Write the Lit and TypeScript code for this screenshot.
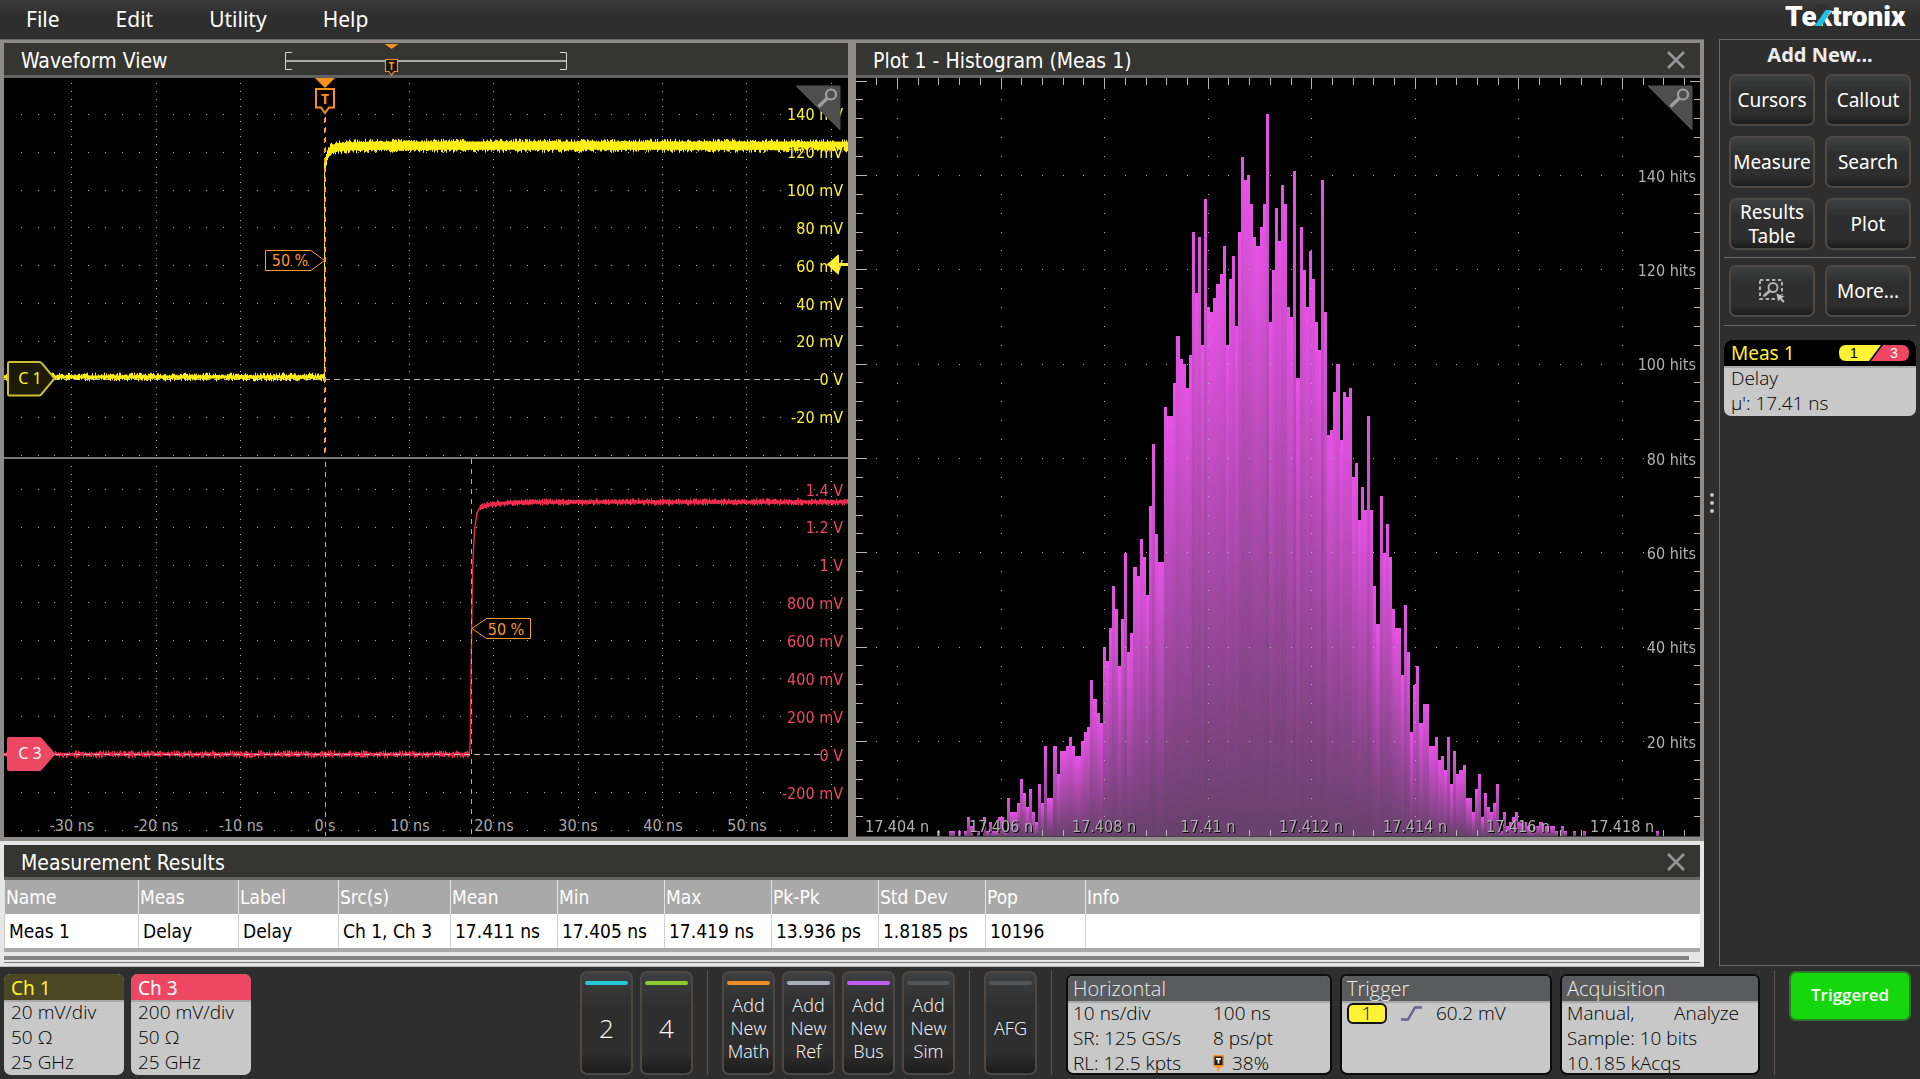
import { LitElement, html, css, svg } from "lit";
import { customElement, property } from "lit/decorators.js";

/* ---------- trace and grid data ---------- */

const DIV_X = 84.4;
const DIV_Y = 37.9;
const TRIGGER_X = 325;

function random(seed: number): () => number {
  let s = seed;
  return () => {
    s = (s * 1664525 + 1013904223) % 4294967296;
    return s / 4294967296;
  };
}

/** Vertical one-pixel strokes around a centre line, with noise on both ends. */
function noisyBand(
  from: number,
  to: number,
  centre: (x: number) => number,
  half: number,
  jitter: number,
  seed: number,
): string {
  const rnd = random(seed);
  let d = "";
  for (let x = from; x < to; x++) {
    const c = centre(x);
    const up = half + Math.pow(rnd(), 2) * jitter;
    const down = half + Math.pow(rnd(), 2) * jitter;
    d += `M${x}.5 ${(c - up).toFixed(1)}V${(c + down).toFixed(1)}`;
  }
  return d;
}

/** Dotted graticule: five dots per division along every grid line. */
function graticule(
  x0: number, x1: number, dx: number, ox: number,
  y0: number, y1: number, dy: number, oy: number,
  skipAxes = false,
): string {
  let d = "";
  const dot = (x: number, y: number) => {
    if (skipAxes && (Math.abs(x - ox) < 1 || Math.abs(y - oy) < 1)) return;
    d += `M${Math.floor(x)} ${Math.floor(y)}.5h1`;
  };
  const first = (o: number, step: number, low: number) => o - Math.floor((o - low) / step) * step;
  for (let x = first(ox, dx, x0); x < x1; x += dx) {
    for (let y = first(oy, dy / 5, y0); y < y1; y += dy / 5) dot(x, y);
  }
  for (let y = first(oy, dy, y0); y < y1; y += dy) {
    for (let x = first(ox, dx / 5, x0); x < x1; x += dx / 5) dot(x, y);
  }
  return d;
}

const CH1_LOW = noisyBand(4, 325, () => 377, 1.5, 3, 11);
const CH1_HIGH = noisyBand(325, 848, (x) => 145.7 + 15 * Math.exp(-(x - 325) / 2.5) + 4 * Math.exp(-(x - 325) / 14), 4, 3.2, 29);
const CH3_LOW = noisyBand(4, 470, () => 754.3, 1.3, 2.8, 47);
const CH3_HIGH = noisyBand(480, 848, (x) => 502 + 5 * Math.exp(-(x - 480) / 16), 1.6, 2.2, 83);

const CH1_SCALE = ["140 mV", "120 mV", "100 mV", "80 mV", "60 mV", "40 mV", "20 mV", "0 V", "-20 mV"];
const CH3_SCALE = ["1.4 V", "1.2 V", "1 V", "800 mV", "600 mV", "400 mV", "200 mV", "0 V", "-200 mV"];
const TIME_SCALE = ["-30 ns", "-20 ns", "-10 ns", "0 s", "10 ns", "20 ns", "30 ns", "40 ns", "50 ns"];

/* Hits per bin, from the first populated bin on. */
const HITS = [
  1, 0, 0, 0, 1, 1, 0, 1, 0, 1, 4, 2, 0, 1, 0, 4, 1, 3, 1, 1, 4, 4, 1, 8, 5, 5, 7, 12, 9, 6, 10, 5, 3, 11, 7, 19, 8, 8,
  19, 13, 18, 18, 19, 21, 19, 17, 17, 20, 22, 23, 33, 29, 26, 24, 40, 37, 44, 53, 48, 36, 46, 60, 39, 43, 57, 55, 63,
  59, 51, 70, 83, 64, 58, 58, 91, 89, 89, 96, 106, 101, 100, 95, 102, 128, 115, 127, 104, 135, 112, 111, 114, 117,
  119, 125, 104, 118, 123, 108, 128, 144, 139, 140, 134, 127, 125, 129, 134, 153, 109, 120, 133, 126, 138, 134, 112,
  110, 141, 97, 129, 120, 112, 124, 118, 109, 103, 139, 111, 85, 86, 94, 100, 84, 94, 93, 95, 76, 79, 67, 74, 69, 89,
  69, 53, 45, 72, 60, 66, 59, 48, 44, 44, 34, 49, 39, 22, 32, 36, 24, 28, 28, 19, 19, 21, 16, 17, 14, 21, 11, 18, 13,
  14, 15, 8, 8, 5, 10, 13, 4, 9, 6, 5, 7, 11, 1, 5, 2, 3, 4, 5, 3, 3, 3, 2, 1, 2, 2, 3, 2, 2, 2, 2, 1, 0, 2, 1, 0, 0,
  1, 0, 0, 1, 0, 0, 0, 0, 0, 0, 0, 0, 0, 0, 0, 0, 0, 0, 0, 0, 0, 0, 0, 0, 0, 0, 0, 1,
];
const BIN = 3.0759;
const HIT = 4.717;
const HIST_BASE = 836;
const binX = (i: number) => Math.floor(1053.958 + BIN * (i - 38));

const DELAY_SCALE = ["17.404 n", "17.406 n", "17.408 n", "17.41 n", "17.412 n", "17.414 n", "17.416 n", "17.418 n"];
const DELAY_X = 897.5;
const DELAY_STEP = 103.57;

function histogramTicks(): string {
  let d = "";
  for (let k = -2; k <= 38; k++) {
    const x = Math.floor(DELAY_X + (k * DELAY_STEP) / 5) + 0.5;
    if (x < 858 || x > 1698) continue;
    const major = ((k % 5) + 5) % 5 === 0;
    d += `M${x} 78V${major ? 89 : 85}`;
    const near = Math.min(...DELAY_SCALE.map((_, i) => Math.abs(DELAY_X + i * DELAY_STEP - x)));
    if (near > 32) d += `M${x} 830V836`;
  }
  for (let k = 1; k <= 40; k++) {
    const y = Math.floor(835.8 - k * 4 * HIT) + 0.5;
    const major = k % 5 === 0;
    d += `M856 ${y}h${major ? 11 : 7}`;
    if (!major) d += `M1694 ${y}h6`;
    if (k === 40) d += `M1690 ${y}h10`;
  }
  return d;
}

const zoomCorner = (x: number) => svg`
  <g class="corner">
    <path d="M${x + 1} 86h43q1 0 1 1v43z" fill="#4e4e4e" stroke="#4e4e4e" stroke-linejoin="round"/>
    <circle cx="${x + 36}" cy="94.5" r="5" fill="none" stroke="#a0a0a0" stroke-width="2.2"/>
    <path d="M${x + 32} 98.5L${x + 23.5} 106.5" stroke="#a0a0a0" stroke-width="3.4" stroke-linecap="butt"/>
  </g>`;

/* ---------- waveform view ---------- */

@customElement("waveform-plot")
export class WaveformPlot extends LitElement {
  static styles = css`
    :host { display: block; background: #000; }
    .plot { display: block; width: 100%; height: auto; }
    text { font: 16px "DejaVu Sans Condensed", "DejaVu Sans", sans-serif; }
    .axis { fill: #a9a9a9; text-anchor: middle; }
    .scale { text-anchor: end; filter: drop-shadow(1px 1px 0 #000); }
    .ch1 { fill: #fff133; }
    .ch3 { fill: #ee4763; }
    .tag { fill: #f8982a; text-anchor: middle; }
    .handle { font: 16px "Noto Sans", sans-serif; text-anchor: middle; }
    .marker { font: bold 14px "Noto Sans", sans-serif; text-anchor: middle; fill: #f8901e; }
    .white { fill: #fff; }
    .grid { stroke: #b4b4b4; stroke-width: 1; shape-rendering: crispEdges; fill: none; }
    .edge { stroke: #ff9c2a; shape-rendering: crispEdges; fill: none; stroke-dasharray: 5 5; stroke-width: 1; }
    .zero { stroke-dasharray: 6 4; }
    .zero-v { stroke-dasharray: 5 5; }
  `;

  render() {
    return html`
      <svg class="plot" viewBox="4 78 844 759" role="img" aria-label="Channel 1 and channel 3 waveforms">
        <path class="grid" d="${graticule(5, 848, DIV_X, TRIGGER_X, 80, 456, DIV_Y, 379.5, true)}" />
        <path class="grid" d="${graticule(5, 848, DIV_X, TRIGGER_X, 460, 832, DIV_Y, 754.5, true)}" />
        <path class="grid zero" d="M4 379.5H822" />

        <path d="${CH1_LOW}" stroke="#ffee14" />
        <path d="M324.5 378V160" stroke="#ffee14" />
        <path d="${CH1_HIGH}" stroke="#ffee14" />
        <path d="${CH3_LOW}" stroke="#ef2b50" />
        <path d="M469 754Q470.500 750 470.500 720L471.500 640L472.500 570L474.500 530L477 513L480 507L483 506"
          fill="none" stroke="#ef2b50" stroke-width="1.4" />
        <path d="${CH3_HIGH}" stroke="#ef2b50" />

        <path class="grid zero" d="M4 754.5H826" />
        <path class="grid zero-v" d="M325.5 117V456M325.5 462V836" />
        <path class="edge" d="M324.5 118V455M471.5 459V834" />
        <path d="M4 458H848" stroke="#787878" stroke-width="2" />

        ${CH1_SCALE.map((t, i) => svg`<text class="scale ch1" x="843" y="${Math.floor(120.5 + i * DIV_Y)}">${t}</text>`)}
        ${CH3_SCALE.map((t, i) => svg`<text class="scale ch3" x="843" y="${Math.floor(496 + i * DIV_Y)}">${t}</text>`)}
        ${TIME_SCALE.map((t, i) => svg`<text class="axis" x="${Math.round(72 + i * DIV_X)}" y="831">${t}</text>`)}

        <path d="M265.500 250.500H311L324.500 260.500L311 270.500H265.500z" fill="none" stroke="#ff9c2a" />
        <text class="tag" x="290" y="266">50 %</text>
        <path d="M530.500 618.500H486.500L472 628.500L486.500 638.500H530.500z" fill="none" stroke="#ff9c2a" />
        <text class="tag" x="506" y="635">50 %</text>

        <path d="M9 362H39Q41 362 42 363.500L54.500 378.500L42 393.500Q41 395.500 39 395.500H9Q8 395.500 8 394V363.500Q8 362 9 362z"
          fill="#1d1b06" stroke="#c9c032" stroke-width="2" />
        <text class="handle ch1" x="30" y="384">C 1</text>
        <path d="M9 737H39Q41 737 42 738.500L55.500 754L42 769.500Q41 771 39 771H9Q7 771 7 769V739Q7 737 9 737z" fill="#ee4763" />
        <text class="handle white" x="30" y="759">C 3</text>

        <path d="M315 78H335L325 88z" fill="#f8901e" />
        <path d="M316 89H334V107.500H329L325 113L321 107.500H316z" fill="#000" stroke="#f8901e" stroke-width="2" />
        <text class="marker" x="325" y="104">T</text>

        <path d="M827 264.500L838 254.500Q839 254.500 839 256V263H848V266H839V273Q839 274.500 838 274.500z" fill="#ffee33" />
        ${zoomCorner(795)}
      </svg>
    `;
  }
}

/* ---------- histogram ---------- */

@customElement("histogram-plot")
export class HistogramPlot extends LitElement {
  static styles = css`
    :host { display: block; background: #000; }
    .plot { display: block; width: 100%; height: auto; }
    text { font: 16px "DejaVu Sans Condensed", "DejaVu Sans", sans-serif; fill: #b0b0b0; filter: drop-shadow(1px 1px 0 #000); }
    .axis { text-anchor: middle; }
    .scale { text-anchor: end; }
    .grid { stroke: #b4b4b4; shape-rendering: crispEdges; fill: none; }
  `;

  render() {
    return html`
      <svg class="plot" viewBox="856 78 844 759" role="img" aria-label="Histogram of measurement 1">
        <defs>
          <linearGradient id="bar" x1="0" y1="0" x2="0" y2="1">
            <stop offset="0" stop-color="#e752e6" />
            <stop offset="1" stop-color="#67406b" />
          </linearGradient>
        </defs>
        ${HITS.map((n, i) => n === 0 ? "" : svg`<rect x="${binX(i)}" y="${Math.round(835.8 - n * HIT)}"
          width="${binX(i + 1) - binX(i)}" height="${HIST_BASE - Math.round(835.8 - n * HIT)}" fill="url(#bar)"/>`)}
        <path class="grid" d="${graticule(868, 1645, DELAY_STEP, DELAY_X, 92, 820, HIT * 20, 741.5)}" />
        <path class="grid" d="${histogramTicks()}" />
        <path d="M856 836.500H1700" stroke="#444" />
        ${DELAY_SCALE.map((t, i) => svg`<text class="axis" x="${Math.floor(DELAY_X + i * DELAY_STEP)}" y="832">${t}</text>`)}
        ${[140, 120, 100, 80, 60, 40, 20].map((n) => svg`<text class="scale" x="1696" y="${Math.round(842 - n * HIT)}">${n} hits</text>`)}
        ${zoomCorner(1647)}
      </svg>
    `;
  }
}

/* ---------- settings badge ---------- */

@customElement("setting-badge")
export class SettingBadge extends LitElement {
  @property() heading = "";
  @property() tone = "system";

  static styles = css`
    :host { display: block; }
    .badge { display: flex; flex-direction: column; height: 100%; box-sizing: border-box; border-radius: 7px; overflow: hidden; background: #c8c8c8; }
    .head { display: flex; align-items: center; justify-content: space-between; height: 26px; padding: 0 7px; border-bottom: 2px solid #a8a8a8; font: 19px/26px "Noto Sans", sans-serif; }
    .body { margin-top: -2px; padding: 0 7px; font: 300 19px/25px "Open Sans", sans-serif; color: #000; white-space: nowrap; }
    .ch1 .head { height: 24px; padding-top: 2px; background: #4b4624; color: #fff133; }
    .ch3 .head { height: 24px; padding-top: 2px; background: #ee4763; color: #fff; }
    .system { border: 2px solid #0c0c0c; }
    .system .head { padding: 0 5px; background: #5a5b5d; color: #ececec; height: 25px; font: 300 20px/25px "Open Sans", sans-serif; }
    .system .body { padding: 0 5px; }
    .meas .head { background: #000; color: #fff133; }
  `;

  render() {
    return html`
      <section class="badge ${this.tone}">
        <div class="head"><span>${this.heading}</span><slot name="sources"></slot></div>
        <div class="body"><slot></slot></div>
      </section>
    `;
  }
}

/* ---------- application ---------- */

const COLUMNS = ["Name", "Meas", "Label", "Src(s)", "Mean", "Min", "Max", "Pk-Pk", "Std Dev", "Pop", "Info"];
const ROW = ["Meas 1", "Delay", "Delay", "Ch 1, Ch 3", "17.411 ns", "17.405 ns", "17.419 ns", "13.936 ps", "1.8185 ps", "10196", ""];

const closeIcon = html`
  <svg class="close-icon" viewBox="0 0 18 18" aria-hidden="true">
    <path d="M1 1L17 17M17 1L1 17" stroke="#96969a" stroke-width="2.6" />
  </svg>`;

@customElement("app-root")
export class AppRoot extends LitElement {
  static styles = css`
    :host { display: block; min-height: 100vh; background: #2e2e2e; color: #fff; font-family: "Noto Sans", sans-serif; }
    button { font: inherit; color: inherit; background: none; border: 0; padding: 0; margin: 0; cursor: pointer; }

    .menubar { display: flex; justify-content: space-between; height: 39px; background: linear-gradient(#3c3c3c, #2e2e2e 40%); }
    .menu { display: flex; gap: 56px; height: 37px; padding-left: 26px; font-size: 21px; }
    .logo { display: block; width: 122px; height: 32px; margin-right: 14px; }
    .logo text { font: 900 28px Roboto, "Open Sans", sans-serif; fill: #fff; }

    .workspace { display: grid; grid-template-columns: minmax(0, 1fr) 15px 201px; }
    .panels { display: grid; grid-template-columns: repeat(2, minmax(0, 1fr)); column-gap: 8px; padding: 3px 4px 4px; border-top: 1px solid #6c6a68; background: #8f8b88; }
    .title { display: flex; align-items: center; height: 30px; border-bottom: 3px solid #626262; background: #353532; padding: 2px 15px 0 17px; color: #fff; }
    .title h2 { margin: 0; padding-top: 2px; font: 21px/28px "DejaVu Sans Condensed", "DejaVu Sans", sans-serif; }
    .close { margin-left: auto; line-height: 0; }
    .close-icon { width: 18px; height: 18px; display: block; }
    .overview { width: 282px; height: 34px; margin-left: auto; margin-right: 266px; flex: none; }
    .overview text { font: bold 10px "Noto Sans", sans-serif; fill: #f8901e; text-anchor: middle; }

    .splitter { display: flex; flex-direction: column; align-items: center; justify-content: center; gap: 4px; }
    .grip { width: 4px; height: 4px; border-radius: 2px; background: #c4c4c4; }

    .results { padding: 4px; background: #e6e6e6; border-bottom: 1px solid #bdbdbd; padding-bottom: 3px; }
    .table { width: 100%; border-collapse: collapse; table-layout: fixed; background: #fff; color: #000; font: 19px/33px "DejaVu Sans Condensed", "DejaVu Sans", sans-serif; }
    .table th { height: 33px; padding: 1px 1px 0; background: #a9a9a9; color: #fff; font-weight: 400; text-align: left; border-left: 1px solid #e2e2e2; }
    .table td { height: 33px; padding: 1px 0 0 4px; border-left: 1px solid #d0d0d0; white-space: nowrap; }
    .w134 { width: 134px; }
    .w100 { width: 100px; }
    .w112 { width: 112px; }
    .w107 { width: 107px; }
    .track { height: 4px; border-top: 4px solid #a9a9a9; border-bottom: 1px solid #777; padding: 4px 11px 2px 0; }
    .thumb { height: 4px; background: #838383; }

    .sidebar { display: flex; flex-direction: column; box-sizing: border-box; margin-bottom: 1px; padding: 1px 4px 0; border: solid #6a6a6a; border-width: 1px 0 1px 1px; }
    .sidebar h2 { margin: 0 0 5px; text-align: center; font: bold 20px/28px "Noto Sans", sans-serif; color: #ececec; }
    .add { display: grid; grid-template-columns: 1fr 1fr; gap: 10px; padding: 0 5px 7px; border-bottom: 1px solid #6a6a6a; }
    .add + .add { padding-top: 7px; padding-bottom: 8px; }
    .key { display: flex; flex-direction: column; align-items: center; justify-content: center; box-sizing: border-box; height: 52px; border: 2px solid #4e4845; border-radius: 7px; background: linear-gradient(#3e3f40, #2e2e2e 35%, #2e2e2e 80%, #1c1c1c); color: #fff; font: 19px/24px "Noto Sans", sans-serif; text-align: center; }
    .meas-badge { margin-top: 14px; }
    .sources { width: 70px; height: 18px; display: block; }
    .sources text { font: 14px "Liberation Sans", sans-serif; text-anchor: middle; }

    .settings { display: flex; gap: 14px; box-sizing: border-box; height: 112px; padding: 4px 9px 4px 4px; }
    .group { display: flex; gap: 7px; }
    .badges { gap: 8px; }
    .keys { margin-left: auto; }
    .channel { width: 120px; margin-top: 3px; }
    .horizontal { width: 266px; }
    .trigger { width: 212px; }
    .acquisition { width: 200px; }
    .system-badge { margin-top: 3px; }
    .rule { width: 1px; background: #5c5754; }
    .tall { display: block; width: 53px; height: 104px; padding: 7px 2px 0; font: 300 18px/23px "Open Sans", sans-serif; }
    .swatch { display: block; height: 4px; margin: 0 1px; border-radius: 2px; }
    .cyan { background: #20cbd8; }
    .green { background: #8ccc2c; }
    .orange { background: #f08a22; }
    .silver { background: #a9aebc; }
    .violet { background: #c05cf8; }
    .idle { background: #555657; }
    .caption { display: flex; align-items: center; justify-content: center; height: 88px; white-space: pre; }
    .digit { font-size: 26px; }
    .pair { display: grid; grid-template-columns: 140px 1fr; }
    .pair.acq { grid-template-columns: 107px 1fr; }
    .with-icon { display: flex; align-items: center; gap: 8px; }
    .t-icon { width: 11px; height: 17px; }
    .trig { display: flex; align-items: center; gap: 14px; height: 25px; }
    .source { box-sizing: border-box; width: 40px; height: 21px; border: 2px solid #111; border-radius: 6px; background: #fff133; line-height: 17px; text-align: center; }
    .slope { width: 21px; height: 15px; }
    .state { box-sizing: border-box; width: 122px; height: 50px; padding-bottom: 2px; border: 2px solid #2c7a2a; border-radius: 7px; background: #14d80c; color: #fff; font: 600 17px/44px "Open Sans", sans-serif; }
  `;

  private key(label: unknown) {
    return html`<button class="key">${label}</button>`;
  }

  private tall(color: string, label: string, digit = false) {
    return html`<button class="key tall"><span class="swatch ${color}"></span><span class="caption ${digit ? "digit" : ""}">${label}</span></button>`;
  }

  render() {
    return html`
      <header class="menubar">
        <nav class="menu" aria-label="Main">
          ${["File", "Edit", "Utility", "Help"].map((m) => html`<button>${m}</button>`)}
        </nav>
        <svg class="logo" viewBox="0 0 122 32" role="img" aria-label="Tektronix">
          <text x="1" y="26">Tektronix</text>
          <path d="M33 4H42.500V10L33 26H32z" fill="#313131" />
          <path d="M41.500 10H47.500L37.500 26H30.500z" fill="#1cc0e4" />
        </svg>
      </header>

      <main class="workspace">
        <div class="left">
          <div class="panels">
            <section>
              <div class="title">
                <h2>Waveform View</h2>
                <svg class="overview" viewBox="0 0 282 34" aria-hidden="true">
                  <path d="M0 18H282" stroke="#a9a9a9" stroke-width="2" />
                  <path d="M7 9.500H.500V26.500H7M275 9.500H281.500V26.500H275" fill="none" stroke="#d4d4d4" />
                  <path d="M99.500 1H113.500L106.500 6z" fill="#f8901e" />
                  <path d="M100.500 16.500H112.500V28.500H109L106.500 32L104 28.500H100.500z" fill="#111" stroke="#f8901e" stroke-width="1.200" />
                  <text x="106.500" y="26.500">T</text>
                </svg>
              </div>
              <waveform-plot></waveform-plot>
            </section>
            <section>
              <div class="title">
                <h2>Plot 1 - Histogram (Meas 1)</h2>
                <button class="close" aria-label="Close plot">${closeIcon}</button>
              </div>
              <histogram-plot></histogram-plot>
            </section>
          </div>
          <section class="results">
            <div class="title">
              <h2>Measurement Results</h2>
              <button class="close" aria-label="Close results">${closeIcon}</button>
            </div>
            <table class="table">
              <colgroup>
                <col class="w134" /><col class="w100" /><col class="w100" /><col class="w112" />
                <col class="w107" /><col class="w107" /><col class="w107" /><col class="w107" /><col class="w107" />
                <col class="w100" /><col />
              </colgroup>
              <thead><tr>${COLUMNS.map((c) => html`<th scope="col">${c}</th>`)}</tr></thead>
              <tbody><tr>${ROW.map((c) => html`<td>${c}</td>`)}</tr></tbody>
            </table>
            <div class="track"><div class="thumb"></div></div>
          </section>
        </div>

        <div class="splitter"><i class="grip"></i><i class="grip"></i><i class="grip"></i></div>

        <aside class="sidebar">
          <h2>Add New...</h2>
          <div class="add">
            ${this.key("Cursors")}${this.key("Callout")}${this.key("Measure")}${this.key("Search")}
            ${this.key(html`Results<br />Table`)}${this.key("Plot")}
          </div>
          <div class="add">
            <button class="key" aria-label="Draw a zoom box">
              <svg width="28" height="26" viewBox="0 0 28 26" aria-hidden="true">
                <path d="M2 2H24V21H2z" fill="none" stroke="#b0b0b0" stroke-width="2" stroke-dasharray="3.4 2.600" />
                <circle cx="15" cy="9.500" r="4.500" fill="#2e2e2e" stroke="#b0b0b0" stroke-width="2" />
                <path d="M11.500 13L6.500 17.500" stroke="#b0b0b0" stroke-width="3" stroke-linecap="round" />
                <path d="M18 15L27 18.500L24 20L27 23.500L25 25L22 21.500L20 24z" fill="#c4c4c4" stroke="#2e2e2e" stroke-width=".6" />
              </svg>
            </button>
            ${this.key("More...")}
          </div>
          <setting-badge class="meas-badge" tone="meas" heading="Meas 1">
            <svg class="sources" slot="sources" viewBox="0 0 70 18" role="img" aria-label="Sources 1 and 3">
              <path d="M7 1H42L30 17H7Q0 17 0 9Q0 1 7 1z" fill="#fff133" />
              <path d="M44 1H63Q70 1 70 9Q70 17 63 17H32z" fill="#ee4763" />
              <text x="15" y="14">1</text>
              <text x="55" y="14" fill="#fff">3</text>
            </svg>
            <div>Delay</div><div>µ': 17.41 ns</div>
          </setting-badge>
        </aside>
      </main>

      <footer class="settings">
        <div class="group">
          <setting-badge class="channel" tone="ch1" heading="Ch 1"><div>20 mV/div</div><div>50 Ω</div><div>25 GHz</div></setting-badge>
          <setting-badge class="channel" tone="ch3" heading="Ch 3"><div>200 mV/div</div><div>50 Ω</div><div>25 GHz</div></setting-badge>
        </div>
        <div class="group keys">${this.tall("cyan", "2", true)}${this.tall("green", "4", true)}</div>
        <i class="rule"></i>
        <div class="group">
          ${this.tall("orange", "Add\nNew\nMath")}${this.tall("silver", "Add\nNew\nRef")}
          ${this.tall("violet", "Add\nNew\nBus")}${this.tall("idle", "Add\nNew\nSim")}
        </div>
        <i class="rule"></i>
        ${this.tall("idle", "AFG")}
        <i class="rule"></i>
        <div class="group badges">
          <setting-badge class="system-badge horizontal" heading="Horizontal">
            <div class="pair"><span>10 ns/div</span><span>100 ns</span></div>
            <div class="pair"><span>SR: 125 GS/s</span><span>8 ps/pt</span></div>
            <div class="pair"><span>RL: 12.5 kpts</span><span class="with-icon">
              <svg class="t-icon" viewBox="0 0 11 17" aria-hidden="true">
                <path d="M0 0H11V11L7 12.500L5.500 17L4 12.500L0 11z" fill="#f8901e" />
                <path d="M1.500 1.500H9.500V10H1.500z" fill="#1c1c1c" />
                <path d="M3 3H8V4.800H6.400V8.500H4.600V4.800H3z" fill="#fff" />
              </svg>38%</span></div>
          </setting-badge>
          <setting-badge class="system-badge trigger" heading="Trigger">
            <div class="trig"><span class="source">1</span>
              <svg class="slope" viewBox="0 0 21 15" aria-hidden="true"><path d="M0 13.500H7L14 1.500H21" fill="none" stroke="#6a6390" stroke-width="2.400" /></svg>
              <span>60.2 mV</span></div>
          </setting-badge>
          <setting-badge class="system-badge acquisition" heading="Acquisition">
            <div class="pair acq"><span>Manual,</span><span>Analyze</span></div>
            <div>Sample: 10 bits</div><div>10.185 kAcqs</div>
          </setting-badge>
        </div>
        <i class="rule"></i>
        <button class="state">Triggered</button>
      </footer>
    `;
  }
}
